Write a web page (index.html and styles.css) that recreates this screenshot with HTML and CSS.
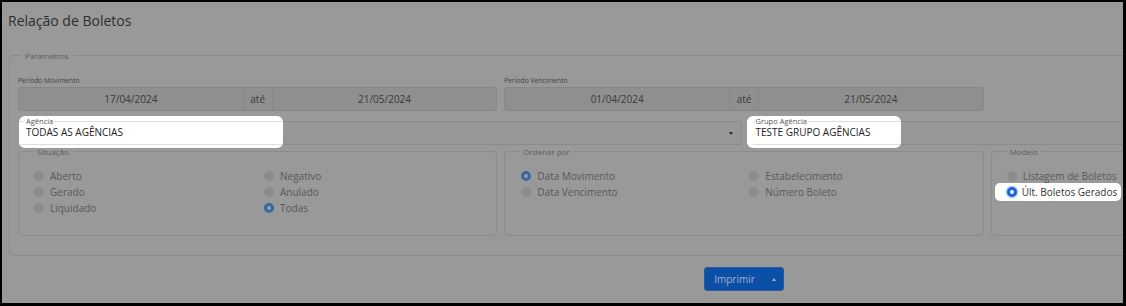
FILE: index.html
```html
<!DOCTYPE html>
<html lang="pt-BR">
<head>
  <meta charset="UTF-8">
  <title>Relação de Boletos</title>
  <link rel="stylesheet" href="styles.css">
</head>
<body>
  <div class="frame">
    <div class="page">
      <h1 class="page-title">Relação de Boletos</h1>

      <fieldset class="params">
        <legend>Parâmetros</legend>

        <!-- Periodos -->
        <div class="row row-three">
          <div class="field">
            <label class="field-label">Período Movimento</label>
            <div class="date-range">
              <span class="date-input">17/04/2024</span>
              <span class="date-addon">até</span>
              <span class="date-input">21/05/2024</span>
            </div>
          </div>
          <div class="field">
            <label class="field-label">Período Vencimento</label>
            <div class="date-range">
              <span class="date-input">01/04/2024</span>
              <span class="date-addon">até</span>
              <span class="date-input">21/05/2024</span>
            </div>
          </div>
          <div></div>
        </div>

        <!-- Agencia / Grupo -->
        <div class="row row-two">
          <div class="select">
            <div class="spot spot-agencia">
              <fieldset class="spot-field">
                <legend>Agência</legend>
                <div class="spot-value">TODAS AS AGÊNCIAS</div>
              </fieldset>
            </div>
            <div class="select-rest"><span class="caret-down"></span></div>
          </div>
          <div class="select">
            <div class="spot spot-grupo">
              <fieldset class="spot-field">
                <legend>Grupo Agência</legend>
                <div class="spot-value">TESTE GRUPO AGÊNCIAS</div>
              </fieldset>
            </div>
            <div class="select-rest"><span class="caret-down"></span></div>
          </div>
        </div>

        <!-- Opcoes -->
        <div class="row row-three row-options">
          <fieldset class="group">
            <legend>Situação</legend>
            <div class="options">
              <div class="option-col">
                <div class="radio"><span class="radio-dot"></span>Aberto</div>
                <div class="radio"><span class="radio-dot"></span>Gerado</div>
                <div class="radio"><span class="radio-dot"></span>Liquidado</div>
              </div>
              <div class="option-col">
                <div class="radio"><span class="radio-dot"></span>Negativo</div>
                <div class="radio"><span class="radio-dot"></span>Anulado</div>
                <div class="radio checked"><span class="radio-dot"></span>Todas</div>
              </div>
            </div>
          </fieldset>
          <fieldset class="group">
            <legend>Ordenar por</legend>
            <div class="options options-order">
              <div class="option-col">
                <div class="radio checked"><span class="radio-dot"></span>Data Movimento</div>
                <div class="radio"><span class="radio-dot"></span>Data Vencimento</div>
              </div>
              <div class="option-col">
                <div class="radio"><span class="radio-dot"></span>Estabelecimento</div>
                <div class="radio"><span class="radio-dot"></span>Número Boleto</div>
              </div>
            </div>
          </fieldset>
          <fieldset class="group">
            <legend>Modelo</legend>
            <div class="options options-single">
              <div class="option-col">
                <div class="radio"><span class="radio-dot"></span>Listagem de Boletos</div>
                <div class="radio checked spot spot-radio"><span class="radio-dot"></span>Últ. Boletos Gerados</div>
              </div>
            </div>
          </fieldset>
        </div>
      </fieldset>

      <div class="actions">
        <button class="btn-print">Imprimir <span class="caret-up"></span></button>
      </div>
    </div>
  </div>
</body>
</html>
```

FILE: styles.css
```css
/* Relação de Boletos - tela escurecida com destaques */
* {
  box-sizing: border-box;
}

body {
  margin: 0;
  font-family: 'Open Sans', 'Liberation Sans', sans-serif;
  background: #000;
}

.frame {
  width: 1126px;
  height: 306px;
  border: solid #000;
  border-width: 2px 3px 3px 2px;
  background: #999;
  overflow: hidden;
}

.page {
  width: 1490px;
  padding-left: 7px;
}

.page-title {
  margin: 9px 0 0 -1px;
  font-size: 14px;
  line-height: 19px;
  font-weight: 400;
  color: #2e2e2e;
}

/* fieldsets */
.params {
  width: 1470px;
  margin: 20px 0 0;
  padding: 15px 8px 19px;
  border: 1px solid #8b8b8b;
  border-radius: 4px;
}

.params > legend,
.group > legend {
  font-size: 8px;
  line-height: 11px;
  padding: 0 4px;
  margin-left: 3px;
  color: #5c5c5c;
}

.row-three {
  display: grid;
  grid-template-columns: repeat(3, 1fr);
  gap: 7px;
}

.row-two {
  display: grid;
  grid-template-columns: repeat(2, 1fr);
  gap: 5px;
  margin-top: 10px;
}

.row-options {
  margin-top: 1px;
}

/* datas */
.field-label {
  display: block;
  font-size: 6.7px;
  line-height: 9px;
  margin-bottom: 2px;
  color: #404040;
}

.date-range {
  display: flex;
  height: 24px;
  border: 1px solid #878787;
  border-radius: 3px;
  background: #8f8f8f;
  font-size: 10px;
  color: #3a3a3a;
}

.date-input {
  flex: 1;
  display: flex;
  align-items: center;
  justify-content: center;
}

.date-addon {
  width: 30px;
  display: flex;
  align-items: center;
  justify-content: center;
  border-left: 1px solid #878787;
  border-right: 1px solid #878787;
}

/* selects */
.select {
  display: flex;
  height: 24px;
}

.select-rest {
  flex: 1;
  display: flex;
  align-items: center;
  justify-content: flex-end;
  padding-right: 8px;
  border: 1px solid #8a8a8a;
  border-left: none;
  border-radius: 0 3px 3px 0;
  background: #979797;
}

.caret-down {
  width: 0;
  height: 0;
  border-left: 2.5px solid transparent;
  border-right: 2.5px solid transparent;
  border-top: 3px solid #2a2a2a;
}

/* destaques */
.spot {
  background: #fff;
  border-radius: 6px;
}

.spot-agencia {
  width: 264px;
  margin: -5px 0 -3px 1px;
}

.spot-grupo {
  width: 154px;
  margin: -5px 0 -3px 0;
}

.spot-field {
  margin: 0;
  padding: 0 0 5px 6px;
  border: none;
  border-top: 1px solid #dedede;
  border-bottom: 1px solid #dedede;
  min-width: 0;
}

.spot-grupo .spot-field {
  margin-left: 6px;
  padding-left: 2px;
}

.spot-field legend {
  font-size: 7.5px;
  line-height: 10px;
  padding: 0 1px;
  color: #555;
}

.spot-value {
  padding-left: 1px;
  font-size: 10px;
  line-height: 13px;
  color: #222;
}

/* grupos de opcoes */
.group {
  margin: 0;
  min-width: 0;
  padding: 11px 10px 19px 11px;
  border: 1px solid #8b8b8b;
  border-radius: 4px;
}

.options {
  display: grid;
  grid-template-columns: 230px 1fr;
  padding-left: 4px;
}

.options-order {
  grid-template-columns: 228px 1fr;
  padding-left: 5px;
}

.options-single {
  grid-template-columns: 1fr;
}

.option-col {
  display: flex;
  flex-direction: column;
  align-items: flex-start;
}

.radio {
  display: flex;
  align-items: center;
  height: 16px;
  font-size: 10px;
  color: #585858;
}

.radio-dot {
  width: 10px;
  height: 10px;
  margin-right: 6px;
  border-radius: 50%;
  background: #8c8c8c;
}

.radio.checked .radio-dot {
  background: #9b9b9b;
  border: 3px solid #3768a6;
}

.spot-radio {
  height: 18px;
  margin: -1px 0 -1px -12px;
  padding: 0 4px 0 12px;
  border-radius: 5px;
  color: #333;
}

.spot-radio .radio-dot,
.radio.checked.spot-radio .radio-dot {
  background: #fff;
  border: 3px solid #1565d8;
  box-shadow: 0 0 0 1.5px #b9d2f5;
  margin-right: 5px;
}

/* botao */
.actions {
  width: 1470px;
  margin-top: 10px;
  text-align: center;
}

.btn-print {
  display: inline-flex;
  align-items: center;
  gap: 17px;
  height: 24px;
  padding: 0 7px 0 9px;
  border: 1px solid #2a5b9c;
  border-radius: 3px;
  background: #0b4fa6;
  color: #a3b1c6;
  font-family: inherit;
  font-size: 10px;
}

.caret-up {
  width: 0;
  height: 0;
  border-left: 2.5px solid transparent;
  border-right: 2.5px solid transparent;
  border-bottom: 3px solid #a3b1c6;
}
```
